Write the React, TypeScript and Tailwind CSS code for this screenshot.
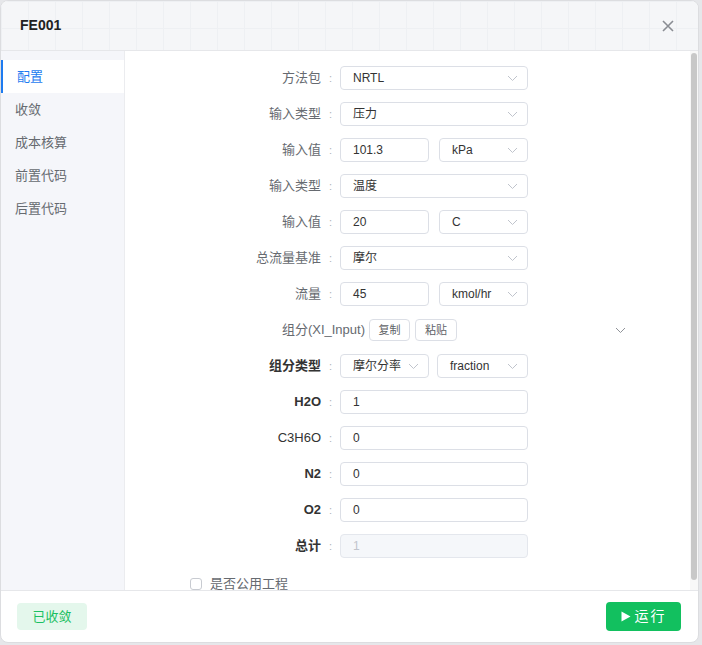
import React from 'react'

const font = 'font-["Liberation_Sans","Noto_Sans_CJK_SC",sans-serif]'

const Chevron = () => (
  <svg width="11" height="7" viewBox="0 0 11 7" fill="none" className="shrink-0">
    <path d="M1 1l4.5 4.5L10 1" stroke="#c0c4cc" strokeWidth="1" />
  </svg>
)

const Select = ({ value, w }: { value: string; w: string }) => (
  <div
    className={`${w} h-[24px] border border-[#dcdfe6] rounded-[4px] bg-white flex items-center justify-between pl-[12px] pr-[9px] text-[12px] text-[#333]`}
  >
    <span>{value}</span>
    <Chevron />
  </div>
)

const Input = ({ value, w, disabled }: { value: string; w: string; disabled?: boolean }) => (
  <div
    className={`${w} h-[24px] border rounded-[4px] flex items-center pl-[12px] text-[12px] ${
      disabled ? 'bg-[#f5f7fa] border-[#e4e7ed] text-[#c0c4cc]' : 'bg-white border-[#dcdfe6] text-[#333]'
    }`}
  >
    {value}
  </div>
)

const Row = ({
  label,
  strong,
  gap = 'gap-[10px]',
  children,
}: {
  label: string
  strong?: boolean
  gap?: string
  children: React.ReactNode
}) => (
  <div className="h-[36px] flex items-center">
    <div
      className={`w-[196px] text-right text-[13px] ${
        strong ? 'font-bold text-[#333]' : 'text-[#666a70]'
      }`}
    >
      {label}
    </div>
    <div className="w-[19px] text-center text-[11px] text-[#b0b3b8]">:</div>
    <div className={`flex items-center ${gap}`}>{children}</div>
  </div>
)

const menu = ['配置', '收敛', '成本核算', '前置代码', '后置代码']

export default function App() {
  return (
    <div className={`w-[702px] h-[645px] bg-[#e6e7ea] ${font}`}>
      <div className="w-[699px] h-[643px] bg-white rounded-[8px] border border-[#dcdde0] overflow-hidden flex flex-col">
        {/* header */}
        <div className="h-[50px] shrink-0 flex items-center justify-between pl-[19px] pr-[24px] border-b border-[#e6e7ea] bg-[#f5f6f8] bg-[image:linear-gradient(to_right,#eef0f3_1px,transparent_1px),linear-gradient(to_bottom,#eef0f3_1px,transparent_1px)] bg-[size:27px_27px]">
          <span className="text-[14px] font-bold text-[#222]">FE001</span>
          <svg width="12" height="12" viewBox="0 0 12 12">
            <path d="M1 1l10 10M11 1L1 11" stroke="#8a8d93" strokeWidth="1.6" />
          </svg>
        </div>

        {/* body */}
        <div className="flex-1 flex min-h-0">
          <div className="w-[124px] shrink-0 bg-[#f5f6fa] border-r border-[#ebecef] pt-[9px]">
            {menu.map((m, i) => (
              <div
                key={m}
                className={`h-[33px] flex items-center pl-[14px] text-[13px] ${
                  i === 0
                    ? 'bg-white text-[#1e7bf0] border-l-2 border-[#1e7bf0] pl-[12px]'
                    : 'text-[#666a70]'
                }`}
              >
                {m}
              </div>
            ))}
          </div>

          <div className="flex-1 relative overflow-hidden">
            <div className="pt-[9px]">
              <Row label="方法包">
                <Select value="NRTL" w="w-[188px]" />
              </Row>
              <Row label="输入类型">
                <Select value="压力" w="w-[188px]" />
              </Row>
              <Row label="输入值">
                <Input value="101.3" w="w-[89px]" />
                <Select value="kPa" w="w-[89px]" />
              </Row>
              <Row label="输入类型">
                <Select value="温度" w="w-[188px]" />
              </Row>
              <Row label="输入值">
                <Input value="20" w="w-[89px]" />
                <Select value="C" w="w-[89px]" />
              </Row>
              <Row label="总流量基准">
                <Select value="摩尔" w="w-[188px]" />
              </Row>
              <Row label="流量">
                <Input value="45" w="w-[89px]" />
                <Select value="kmol/hr" w="w-[89px]" />
              </Row>

              <div className="h-[36px] flex items-center">
                <div className="w-[240px] text-right text-[13px] text-[#666a70]">组分(XI_Input)</div>
                <div className="flex items-center gap-[5px] ml-[4px]">
                  <div className="h-[22px] w-[41px] border border-[#dcdfe6] rounded-[4px] text-[11px] text-[#606266] flex items-center justify-center">
                    复制
                  </div>
                  <div className="h-[22px] w-[42px] border border-[#dcdfe6] rounded-[4px] text-[11px] text-[#606266] flex items-center justify-center">
                    粘贴
                  </div>
                </div>
                <div className="flex-1" />
                <div className="mr-[72px]">
                  <svg width="11" height="7" viewBox="0 0 11 7" fill="none">
                    <path d="M1 1l4.5 4.5L10 1" stroke="#909399" strokeWidth="1" />
                  </svg>
                </div>
              </div>

              <Row label="组分类型" strong gap="gap-[8px]">
                <Select value="摩尔分率" w="w-[89px]" />
                <Select value="fraction" w="w-[91px]" />
              </Row>
              <Row label="H2O" strong>
                <Input value="1" w="w-[188px]" />
              </Row>
              <div className="h-[36px] flex items-center">
                <div className="w-[196px] text-right text-[13px] text-[#333]">C3H6O</div>
                <div className="w-[19px] text-center text-[11px] text-[#b0b3b8]">:</div>
                <Input value="0" w="w-[188px]" />
              </div>
              <Row label="N2" strong>
                <Input value="0" w="w-[188px]" />
              </Row>
              <Row label="O2" strong>
                <Input value="0" w="w-[188px]" />
              </Row>
              <Row label="总计" strong>
                <Input value="1" w="w-[188px]" disabled />
              </Row>

              <div className="h-[38px] flex items-center pl-[65px] pt-[1px]">
                <div className="w-[12px] h-[12px] border border-[#c8cbd1] rounded-[3px] bg-white" />
                <span className="ml-[8px] text-[13px] text-[#666a70]">是否公用工程</span>
              </div>
            </div>

            {/* scrollbar */}
            <div className="absolute right-0 top-0 bottom-0 w-[8px] bg-[#f8f8f8]">
              <div className="absolute left-[1px] top-[2px] bottom-[10px] w-[6px] rounded-[3px] bg-[#c8c8c8]" />
            </div>
          </div>
        </div>

        {/* footer */}
        <div className="h-[52px] shrink-0 border-t border-[#e6e7ea] flex items-center justify-between pl-[16px] pr-[17px]">
          <div className="w-[70px] h-[27px] rounded-[4px] bg-[#e4f7ec] text-[#1cc062] text-[13px] flex items-center justify-center">
            已收敛
          </div>
          <div className="w-[75px] h-[29px] rounded-[4px] bg-[#12c05f] text-white text-[14px] flex items-center justify-center gap-[4px]">
            <svg width="10" height="11" viewBox="0 0 10 11">
              <path d="M0.5 0.5L9.5 5.5L0.5 10.5Z" fill="#fff" />
            </svg>
            <span className="tracking-[2px]">运行</span>
          </div>
        </div>
      </div>
    </div>
  )
}
